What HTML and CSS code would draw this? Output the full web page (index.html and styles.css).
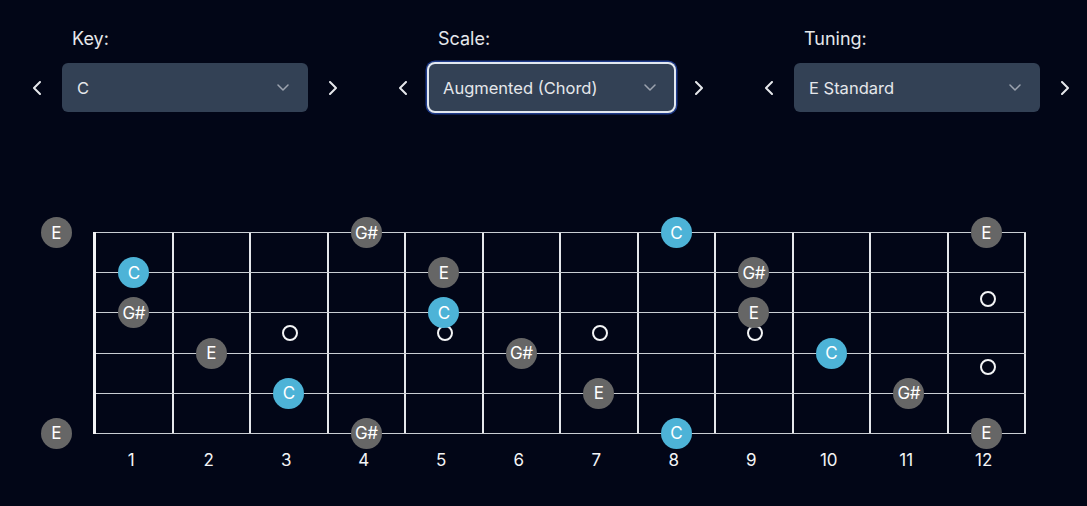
FILE: index.html
```html
<!DOCTYPE html>
<html lang="en">
<head>
<meta charset="utf-8">
<title>Fretboard</title>
<link rel="stylesheet" href="styles.css">
</head>
<body>
<div class="app">
  <div class="controls">
    <div class="control">
      <div class="label">Key:</div>
      <button class="step"><svg width="8" height="14" viewBox="0 0 8 14"><polyline points="7,1 1,7 7,13"/></svg></button>
      <div class="select"><span>C</span><svg class="caret" width="12" height="7" viewBox="0 0 12 7"><polyline points="1,1 6,6 11,1"/></svg></div>
      <button class="step"><svg width="8" height="14" viewBox="0 0 8 14"><polyline points="1,1 7,7 1,13"/></svg></button>
    </div>
    <div class="control">
      <div class="label">Scale:</div>
      <button class="step"><svg width="8" height="14" viewBox="0 0 8 14"><polyline points="7,1 1,7 7,13"/></svg></button>
      <div class="select focused"><span>Augmented (Chord)</span><svg class="caret" width="12" height="7" viewBox="0 0 12 7"><polyline points="1,1 6,6 11,1"/></svg></div>
      <button class="step"><svg width="8" height="14" viewBox="0 0 8 14"><polyline points="1,1 7,7 1,13"/></svg></button>
    </div>
    <div class="control">
      <div class="label">Tuning:</div>
      <button class="step"><svg width="8" height="14" viewBox="0 0 8 14"><polyline points="7,1 1,7 7,13"/></svg></button>
      <div class="select"><span>E Standard</span><svg class="caret" width="12" height="7" viewBox="0 0 12 7"><polyline points="1,1 6,6 11,1"/></svg></div>
      <button class="step"><svg width="8" height="14" viewBox="0 0 8 14"><polyline points="1,1 7,7 1,13"/></svg></button>
    </div>
  </div>

  <div class="neck">
    <div class="board">
      <div class="fret"></div><div class="fret"></div><div class="fret"></div><div class="fret"></div>
      <div class="fret"></div><div class="fret"></div><div class="fret"></div><div class="fret"></div>
      <div class="fret"></div><div class="fret"></div><div class="fret"></div><div class="fret"></div>
      <div class="strings">
        <div class="string"></div><div class="string"></div><div class="string"></div>
        <div class="string"></div><div class="string"></div><div class="string"></div>
      </div>
    </div>

    <div class="markers">
      <div class="marker-slot" style="grid-column:4"><span class="ring"></span></div>
      <div class="marker-slot" style="grid-column:6"><span class="ring"></span></div>
      <div class="marker-slot" style="grid-column:8"><span class="ring"></span></div>
      <div class="marker-slot" style="grid-column:10"><span class="ring"></span></div>
      <div class="marker-slot double" style="grid-column:13"><span class="ring"></span><span class="ring"></span></div>
    </div>

    <div class="notes">
      <!-- string 1 (high E) -->
      <div class="note" style="grid-row:1;grid-column:1">E</div>
      <div class="note" style="grid-row:1;grid-column:5">G#</div>
      <div class="note root" style="grid-row:1;grid-column:9">C</div>
      <div class="note" style="grid-row:1;grid-column:13">E</div>
      <!-- string 2 (B) -->
      <div class="note root" style="grid-row:2;grid-column:2">C</div>
      <div class="note" style="grid-row:2;grid-column:6">E</div>
      <div class="note" style="grid-row:2;grid-column:10">G#</div>
      <!-- string 3 (G) -->
      <div class="note" style="grid-row:3;grid-column:2">G#</div>
      <div class="note root" style="grid-row:3;grid-column:6">C</div>
      <div class="note" style="grid-row:3;grid-column:10">E</div>
      <!-- string 4 (D) -->
      <div class="note" style="grid-row:4;grid-column:3">E</div>
      <div class="note" style="grid-row:4;grid-column:7">G#</div>
      <div class="note root" style="grid-row:4;grid-column:11">C</div>
      <!-- string 5 (A) -->
      <div class="note root" style="grid-row:5;grid-column:4">C</div>
      <div class="note" style="grid-row:5;grid-column:8">E</div>
      <div class="note" style="grid-row:5;grid-column:12">G#</div>
      <!-- string 6 (low E) -->
      <div class="note" style="grid-row:6;grid-column:1">E</div>
      <div class="note" style="grid-row:6;grid-column:5">G#</div>
      <div class="note root" style="grid-row:6;grid-column:9">C</div>
      <div class="note" style="grid-row:6;grid-column:13">E</div>
    </div>

    <div class="numbers">
      <span>1</span><span>2</span><span>3</span><span>4</span><span>5</span><span>6</span>
      <span>7</span><span>8</span><span>9</span><span>10</span><span>11</span><span>12</span>
    </div>
  </div>
</div>
</body>
</html>
```

FILE: styles.css
```css
* { box-sizing: border-box; }

html, body {
  margin: 0;
  padding: 0;
  background: #020617;
}

body {
  font-family: Inter, "Noto Sans", "DejaVu Sans", sans-serif;
  color: #e5e7eb;
  width: 1087px;
  height: 506px;
  overflow: hidden;
}

.controls {
  display: flex;
  gap: 46px;
  padding: 27px 0 0 25px;
}

.control {
  display: grid;
  grid-template-columns: 24px 246px 24px;
  column-gap: 13px;
  row-gap: 12px;
  align-items: center;
}

.label {
  grid-column: 2;
  grid-row: 1;
  padding-left: 10px;
  font-size: 18px;
  line-height: 24px;
  color: #e5e7eb;
}

.step {
  grid-row: 2;
  width: 24px;
  height: 24px;
  padding: 0;
  border: 0;
  background: transparent;
  display: flex;
  align-items: center;
  justify-content: center;
}

.step svg polyline {
  fill: none;
  stroke: #e5e7eb;
  stroke-width: 2;
  stroke-linecap: round;
  stroke-linejoin: round;
}

.select {
  grid-row: 2;
  grid-column: 2;
  height: 49px;
  border-radius: 6px;
  background: #334155;
  display: flex;
  align-items: center;
  justify-content: space-between;
  padding: 0 19px 0 15px;
  font-size: 16.5px;
  color: #e5e7eb;
}

.select.focused {
  height: 51px;
  margin: -1px -2px -1px -1px;
  border-radius: 8px;
  box-shadow: inset 0 0 0 2px #e2e8f0, 0 0 0 1.5px #1e3a8a;
  padding-left: 16px;
  padding-right: 20px;
}

.caret polyline {
  fill: none;
  stroke: #9ca3af;
  stroke-width: 1.5;
  stroke-linecap: round;
  stroke-linejoin: round;
}

/* Fretboard */
.neck {
  position: relative;
  margin: 120px 0 0 17.5px;
  width: 1007.5px;
}

.board {
  position: relative;
  margin-left: 75.5px;
  width: 933px;
  height: 202px;
  border-left: 3px solid #f3f4f6;
  display: grid;
  grid-template-columns: repeat(12, 1fr);
}

.fret {
  border-right: 2px solid #e5e7eb;
}

.strings {
  position: absolute;
  inset: 0;
  display: flex;
  flex-direction: column;
  justify-content: space-between;
}

.string {
  height: 1px;
  background: #c9cdd3;
}

.markers {
  position: absolute;
  left: 0;
  top: 0;
  width: 1007.5px;
  height: 202px;
  display: grid;
  grid-template-columns: repeat(13, 1fr);
  align-items: center;
}

.marker-slot {
  grid-row: 1;
  display: flex;
  flex-direction: column;
  align-items: center;
  gap: 52px;
  padding-left: 3px;
}

.ring {
  display: block;
  width: 16px;
  height: 16px;
  border: 2px solid #f3f4f6;
  border-radius: 50%;
}

.notes {
  position: absolute;
  left: 0;
  top: -19.6px;
  width: 1007.5px;
  height: 241.2px;
  display: grid;
  grid-template-columns: repeat(13, 1fr);
  grid-template-rows: repeat(6, 1fr);
}

.note {
  justify-self: center;
  align-self: center;
  width: 31px;
  height: 31px;
  border-radius: 50%;
  background: #666666;
  color: #ffffff;
  font-size: 17px;
  display: flex;
  align-items: center;
  justify-content: center;
  letter-spacing: -0.4px;
}

.note.root {
  background: #4db3d7;
}

.numbers {
  margin: 16px 0 0 75px;
  width: 930px;
  display: grid;
  grid-template-columns: repeat(12, 1fr);
  font-size: 17px;
  line-height: 20px;
  text-align: center;
  color: #f3f4f6;
}
```
